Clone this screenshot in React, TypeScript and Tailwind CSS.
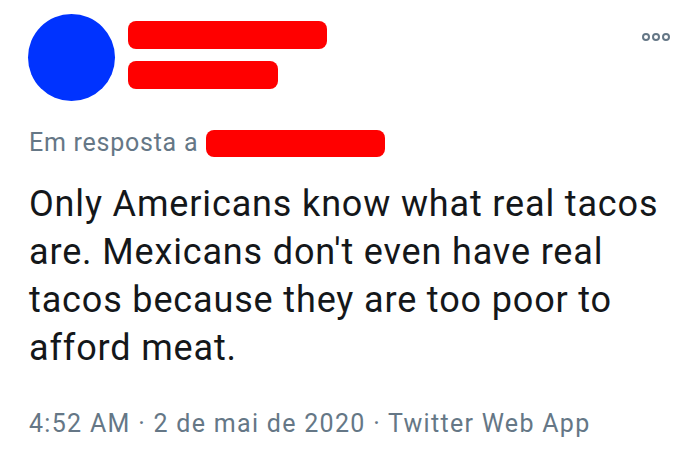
import React from "react";

export default function App() {
  return (
    <div
      className="w-[700px] h-[460px] bg-white relative overflow-hidden"
      style={{ fontFamily: "Roboto, 'Noto Sans', sans-serif" }}
    >
      <div className="flex items-start pt-[14px] pl-[28px]">
        <div className="w-[87px] h-[87px] rounded-full bg-[#0033ff] shrink-0" />
        <div className="flex flex-col gap-[12px] pt-[7px] pl-[13px]">
          <div className="w-[199px] h-[28px] rounded-[8px] bg-[#ff0000]" />
          <div className="w-[150px] h-[28px] rounded-[8px] bg-[#ff0000]" />
        </div>
        <div className="ml-auto mr-[30px] mt-[19px] flex gap-[2px]">
          <span className="w-[8px] h-[8px] rounded-full border-[2px] border-[#657786]" />
          <span className="w-[8px] h-[8px] rounded-full border-[2px] border-[#657786]" />
          <span className="w-[8px] h-[8px] rounded-full border-[2px] border-[#657786]" />
        </div>
      </div>
      <div className="flex items-center pl-[29px] mt-[27px]">
        <span className="text-[25px] leading-[30px] tracking-[0.75px] text-[#657786]">Em resposta a</span>
        <div className="ml-[8px] w-[179px] h-[27px] rounded-[8px] bg-[#ff0000]" />
      </div>
      <div className="pl-[29px] mt-[22px] text-[36px] leading-[48px] tracking-[0.85px] text-[#14171a] whitespace-nowrap">
        <div>Only Americans know what real tacos</div>
        <div>are. Mexicans don't even have real</div>
        <div>tacos because they are too poor to</div>
        <div>afford meat.</div>
      </div>
      <div className="pl-[29px] mt-[37px] text-[25px] leading-[30px] tracking-[1.3px] text-[#657786] whitespace-nowrap">
        4:52 AM · 2 de mai de 2020 · Twitter Web App
      </div>
    </div>
  );
}
